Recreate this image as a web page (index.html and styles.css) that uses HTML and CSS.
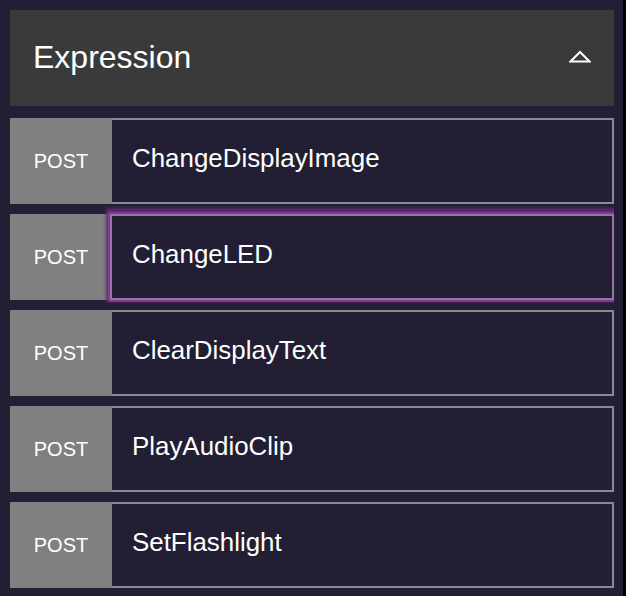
FILE: index.html
```html
<!DOCTYPE html>
<html lang="en">
<head>
<meta charset="utf-8">
<title>Expression</title>
<link rel="stylesheet" href="styles.css">
</head>
<body>
<div class="panel">
  <div class="panel-header">
    <span class="panel-title">Expression</span>
    <svg class="chevron" width="22" height="13" viewBox="0 0 22 13" aria-hidden="true">
      <polygon points="1.5,11.5 11,2 20.5,11.5" fill="none" stroke="#ffffff" stroke-width="2" stroke-linejoin="miter"/>
    </svg>
  </div>
  <div class="endpoint-list">
    <div class="endpoint">
      <div class="method">POST</div>
      <div class="name">ChangeDisplayImage</div>
    </div>
    <div class="endpoint">
      <div class="method">POST</div>
      <div class="name focused">ChangeLED</div>
    </div>
    <div class="endpoint">
      <div class="method">POST</div>
      <div class="name">ClearDisplayText</div>
    </div>
    <div class="endpoint">
      <div class="method">POST</div>
      <div class="name">PlayAudioClip</div>
    </div>
    <div class="endpoint">
      <div class="method">POST</div>
      <div class="name">SetFlashlight</div>
    </div>
  </div>
</div>
</body>
</html>
```

FILE: styles.css
```css
html {
  background: #000000;
  margin: 0;
  padding: 0;
}

body {
  margin: 0;
  width: 623px;
  min-height: 596px;
  box-sizing: border-box;
  padding: 10px 9px 10px 10px;
  background: #221e33;
  font-family: "Liberation Sans", Arial, sans-serif;
  color: #f7f7f7;
}

.panel {
  width: 604px;
  overflow: hidden;
  display: flex;
  flex-direction: column;
  gap: 12px;
}

.panel-header {
  height: 96px;
  background: #3a3a3a;
  display: flex;
  align-items: center;
  justify-content: space-between;
  padding: 0 23px 0 23px;
}

.panel-title {
  font-size: 32px;
  color: #ffffff;
  padding-bottom: 2px;
}

.chevron {
  display: block;
  margin-bottom: 4px;
}

.endpoint-list {
  display: flex;
  flex-direction: column;
  gap: 10px;
  padding-bottom: 8px;
}

.endpoint {
  display: flex;
  height: 86px;
  box-sizing: border-box;
  border: 2px solid #8a8a8a;
  border-left: none;
}

.method {
  width: 102px;
  margin-top: -2px;
  margin-bottom: -2px;
  background: #808080;
  color: #ffffff;
  font-size: 20px;
  display: flex;
  align-items: center;
  justify-content: center;
  padding-top: 1px;
}

.name {
  flex: 1;
  display: flex;
  align-items: center;
  padding: 0 0 5px 20px;
  font-size: 25.9px;
  color: #ffffff;
  background: #221e33;
}

.name.focused {
  position: relative;
  box-shadow: 0 0 0 2px #9a72a8, 0 0 0 4px #7a3d8e, 0 -2px 3px 6px #5e2a72;
}
```
